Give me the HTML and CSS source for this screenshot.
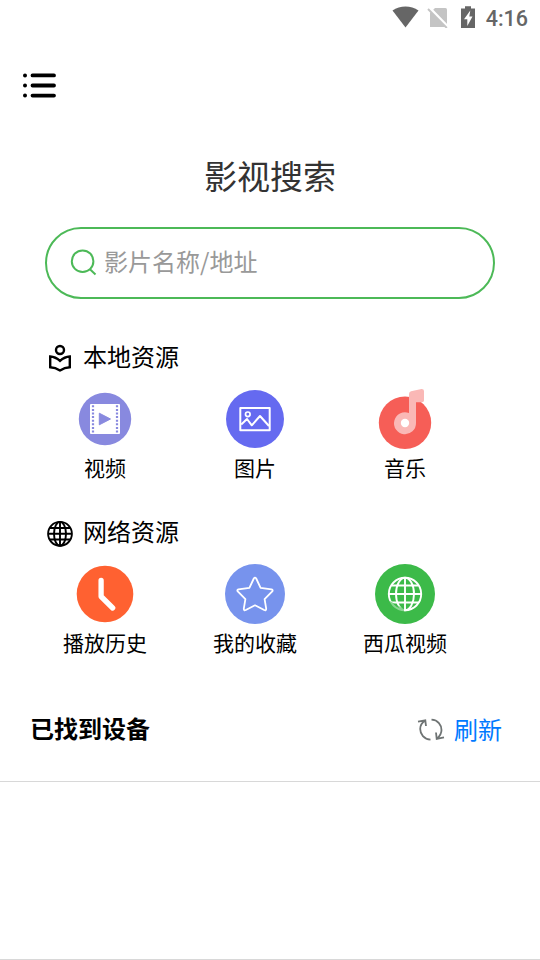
FILE: index.html
```html
<!DOCTYPE html>
<html lang="zh-CN">
<head>
<meta charset="utf-8">
<title>影视搜索</title>
<link rel="stylesheet" href="styles.css">
</head>
<body>
<div class="status">
  <svg class="status-icons" viewBox="0 0 90 28" width="90" height="28">
    <path d="M.5 10.500C8 5.200 19 5.200 26.500 10.500L13.500 27.500Z" fill="#666"/>
    <path d="M43 8h10.500q1.500 0 1.500 1.500v17.500h-17v-14z" fill="#c4c4c4"/>
    <path d="M37.500 8L56 27" stroke="#fff" stroke-width="3"/>
    <path d="M36 9L54.800 28" stroke="#c4c4c4" stroke-width="1.900"/>
    <path d="M69 8.500h4V6.200h6v2.300h4V28H69Z" fill="#666"/>
    <path d="M78.300 10.500L72 19.200h3.300v6.800L80.500 16.500h-3.200Z" fill="#fff"/>
  </svg>
  <span class="time">4:16</span>
</div>
<header class="header">
  <svg viewBox="0 0 34 26" width="34" height="26">
    <g stroke="#000" stroke-width="3.800" stroke-linecap="round"><path d="M9.500 2.400h21.500M9.500 12.500h21.500M9.500 22.600h21.500"/></g>
    <circle cx="2" cy="2.400" r="2"/><circle cx="2" cy="12.500" r="2"/><circle cx="2" cy="22.600" r="2"/>
  </svg>
</header>
<h1 class="title">影视搜索</h1>
<div class="search">
  <svg viewBox="0 0 28 28" width="28" height="28" fill="none" stroke="#4cb957" stroke-width="2">
    <circle cx="13.600" cy="13.200" r="10.800"/><path d="M20.700 21L26.500 26.400"/>
  </svg>
  <span>影片名称/地址</span>
</div>
<section class="section">
  <h2 class="section-title">
    <svg viewBox="0 0 28 28" width="28" height="28" fill="none" stroke="#000" stroke-width="2.400">
      <circle cx="14" cy="6" r="4"/>
      <path d="M4.200 12.500C8 12.700 11.300 14.400 14 16.800C16.700 14.400 20 12.700 23.800 12.500V23.200C20 23.300 17 24.400 14 26.400C11 24.400 8 23.300 4.200 23.200Z"/>
    </svg>
    <span>本地资源</span>
  </h2>
  <div class="grid">
    <div class="item">
      <svg viewBox="0 0 60 60" width="60" height="60">
        <circle cx="30" cy="30" r="26.200" fill="#8889df"/>
        <rect x="15" y="15" width="30" height="30" rx="1" fill="#fff"/>
        <path d="M18 16.300V44M42 16.300V44" stroke="#8889df" stroke-width="2.200" stroke-dasharray="2 1.600"/>
        <path d="M24.300 24.200L35.500 30L24.300 35.800Z" fill="#8889df" stroke="#8889df" stroke-linejoin="round"/>
      </svg>
      <span>视频</span>
    </div>
    <div class="item">
      <svg viewBox="0 0 60 60" width="60" height="60">
        <circle cx="30" cy="30" r="29" fill="#656af0"/>
        <g fill="none" stroke="#fff" stroke-width="2" stroke-linejoin="round">
          <rect x="15.300" y="19" width="29.400" height="22.300"/>
          <circle cx="22.800" cy="25.300" r="2.300" stroke-width="1.700"/>
          <path d="M16.200 35.500L22 30L26.800 36.300L35 27L44 37"/>
        </g>
      </svg>
      <span>图片</span>
    </div>
    <div class="item">
      <svg viewBox="0 0 60 60" width="60" height="60">
        <circle cx="30" cy="33.800" r="26.200" fill="#f65e57"/>
        <path d="M34 24V5Q34 2.800 36 2.200L46.500 .1Q49 0 49 2V11.500Q49 13.300 47 13.300H41V34A11 11 0 1 1 34 24Z" fill="#fab8b6"/>
        <circle cx="30" cy="34" r="4.200" fill="#fff"/>
      </svg>
      <span>音乐</span>
    </div>
  </div>
</section>
<section class="section">
  <h2 class="section-title">
    <svg viewBox="0 0 28 28" width="28" height="28" fill="none" stroke="#000" stroke-width="1.900">
      <circle cx="14" cy="14.800" r="11.900"/><ellipse cx="14" cy="14.800" rx="6" ry="11.900"/>
      <path d="M14 3V27M2 14.800H26M4 9H24M4 20.500H24"/>
    </svg>
    <span>网络资源</span>
  </h2>
  <div class="grid">
    <div class="item">
      <svg viewBox="0 0 60 60" width="60" height="60">
        <circle cx="30" cy="30" r="28.300" fill="#ff6131"/>
        <path d="M26.100 16.500V32.500L37.700 44" fill="none" stroke="#fff" stroke-width="5.300" stroke-linecap="round" stroke-linejoin="round"/>
      </svg>
      <span>播放历史</span>
    </div>
    <div class="item">
      <svg viewBox="0 0 60 60" width="60" height="60">
        <circle cx="30" cy="30" r="30" fill="#7793ed"/>
        <path d="M28.800 14.500Q30 12.800 31.200 14.500L35.600 23.800L46.500 25.400Q48.500 26 47 27.700L39.600 35.200L41.200 44.700Q41.200 46.900 39.200 46L30 41.300L20.800 46Q18.800 46.900 18.800 44.700L20.400 35.200L13 27.700Q11.500 26 13.500 25.400L24.400 23.800Z" fill="none" stroke="#fff" stroke-width="1.800" stroke-linejoin="round"/>
      </svg>
      <span>我的收藏</span>
    </div>
    <div class="item">
      <svg viewBox="0 0 60 60" width="60" height="60">
        <circle cx="30" cy="30" r="30" fill="#3cba49"/>
        <g fill="none" stroke="#fff" stroke-width="1.900">
          <circle cx="30" cy="30" r="16.200"/><ellipse cx="30" cy="30" rx="9" ry="16.200"/>
          <path d="M30 14V46M14 30H46M15.500 25.500M16 24.800H44M16 34.800" stroke="none"/>
          <path d="M30 14V46M14 30H46M16.500 21.500H43.500M16.500 38.500H43.500"/>
        </g>
        <path d="M13 36L29 45V48H20L12 39Z" fill="#3cba49" opacity=".6"/>
      </svg>
      <span>西瓜视频</span>
    </div>
  </div>
</section>
<div class="devices">
  <h2>已找到设备</h2>
  <div class="refresh">
    <svg viewBox="0 0 28 24" width="28" height="24" fill="none" stroke="#6f7474" stroke-width="1.800">
      <path d="M13.500 21.600C7 21.300 3.200 16 3.200 11C3.200 7.500 5 4.700 8 2.600M1 3.600L8.300 2.400L9 8"/>
      <path d="M14.500 1.700C21 2 24.500 7 24.500 12C24.500 15.500 23 18 20 20.600M19 14.500L19.700 20.900L27 19.300"/>
    </svg>
    <span>刷新</span>
  </div>
</div>
<div class="list"></div>
</body>
</html>
```
FILE: styles.css
```css
* {
  box-sizing: border-box;
}
body {
  margin: 0;
  height: 960px;
  display: flex;
  flex-direction: column;
  overflow: hidden;
  background: #fff;
  color: #000;
  font-family: "Noto Sans CJK SC", sans-serif;
}
svg {
  display: block;
  flex: none;
}
h1, h2 {
  margin: 0;
  font-weight: 400;
}
.status {
  height: 36px;
  display: flex;
  justify-content: flex-end;
  gap: 4px;
  padding-right: 12px;
}
.time {
  font: 500 21.500px/38px Roboto, sans-serif;
  color: #666;
}
.header {
  height: 99px;
  padding: 37px 23px 0;
}
.title {
  height: 92px;
  line-height: 81px;
  text-align: center;
  font-size: 33px;
  color: #333;
}
.search {
  height: 72px;
  margin: 0 45px;
  padding: 0 22px 2px;
  display: flex;
  align-items: center;
  gap: 7px;
  border: 2px solid #4cb957;
  border-radius: 36px;
  font-size: 24px;
  color: #999;
}
.search span {
  margin-bottom: 4px;
}
.section {
  height: 175px;
  padding: 0 30px;
}
.search + .section {
  margin-top: 40px;
}
.section-title {
  height: 50px;
  padding: 5px 16px 0;
  display: flex;
  gap: 9px;
  font-size: 24px;
  line-height: 28px;
}
.section-title span {
  margin-top: -2px;
}
.grid {
  display: grid;
  grid-template-columns: repeat(3, 150px);
}
.item {
  display: flex;
  flex-direction: column;
  align-items: center;
  font-size: 21px;
  line-height: 36px;
}
.devices {
  height: 93px;
  padding: 0 38px 10px 30px;
  display: flex;
  align-items: center;
  justify-content: space-between;
  border-bottom: 1px solid #d8d8d8;
}
.devices h2 {
  margin-bottom: 6px;
  font-size: 24px;
  font-weight: 700;
}
.refresh {
  display: flex;
  align-items: center;
  gap: 9px;
  font-size: 24px;
  color: #007aff;
}
.refresh span {
  margin-bottom: 4px;
}
.list {
  flex: 1;
  border-bottom: 1px solid #d8d8d8;
}
```
